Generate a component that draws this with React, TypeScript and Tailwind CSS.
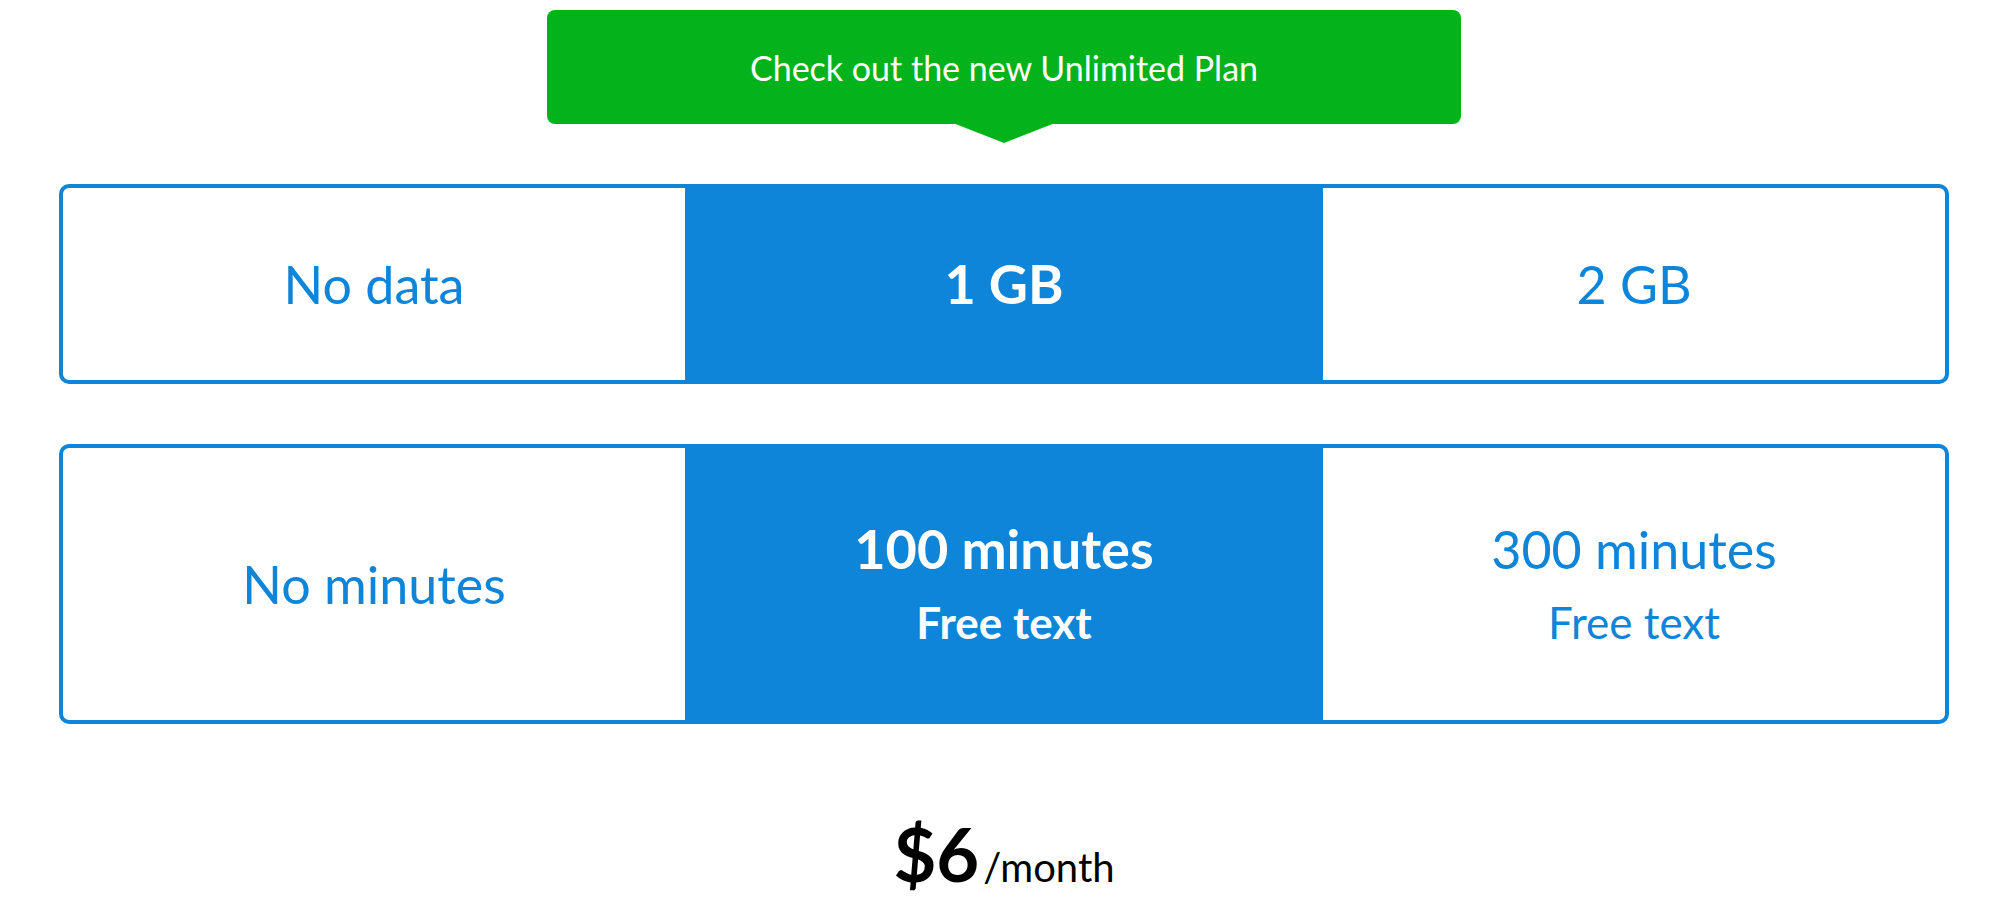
import React from "react";

const font = "font-['Lato','Noto_Sans',sans-serif]";

function Cell({
  lines,
  selected,
  width,
}: {
  lines: string[];
  selected?: boolean;
  width: string;
}) {
  return (
    <div
      className={
        selected
          ? `${width} -my-[4px] bg-[#0e85d9] text-white font-bold flex flex-col items-center justify-center`
          : `${width} text-[#0e85d9] font-normal flex flex-col items-center justify-center`
      }
    >
      {lines.map((l, i) => (
        <div
          key={i}
          className={
            i === 0
              ? selected
                ? "text-[54px] leading-[64px]"
                : "text-[52px] leading-[64px]"
              : "mt-[12px] text-[44px] leading-[58px]"
          }
        >
          {l}
        </div>
      ))}
    </div>
  );
}

export default function App() {
  return (
    <div className={`bg-white min-h-[916px] ${font}`}>
      <div className="ml-[59px] w-[1890px] pt-[10px]">
        <div className="relative mx-auto w-[914px] h-[114px] rounded-[8px] bg-[#04b31b] flex items-center justify-center text-white text-[34px]">
          Check out the new Unlimited Plan
          <svg
            className="absolute top-full left-1/2 -translate-x-1/2"
            width="97"
            height="19"
            viewBox="0 0 97 19"
          >
            <polygon points="0,0 48.5,19 97,0" fill="#04b31b" />
          </svg>
        </div>

        <div className="mt-[60px] h-[200px] border-4 border-[#0e85d9] rounded-[10px] flex">
          <Cell width="w-[622px]" lines={["No data"]} />
          <Cell width="w-[638px]" selected lines={["1 GB"]} />
          <Cell width="flex-1" lines={["2 GB"]} />
        </div>

        <div className="mt-[60px] h-[280px] border-4 border-[#0e85d9] rounded-[10px] flex">
          <Cell width="w-[622px]" lines={["No minutes"]} />
          <Cell
            width="w-[638px]"
            selected
            lines={["100 minutes", "Free text"]}
          />
          <Cell width="flex-1" lines={["300 minutes", "Free text"]} />
        </div>

        <div className="mt-[90px] flex items-baseline justify-center text-black">
          <span className="text-[74px] font-bold leading-[80px]">$6</span>
          <span className="text-[40px] font-normal ml-[4px]">/month</span>
        </div>
      </div>
    </div>
  );
}
